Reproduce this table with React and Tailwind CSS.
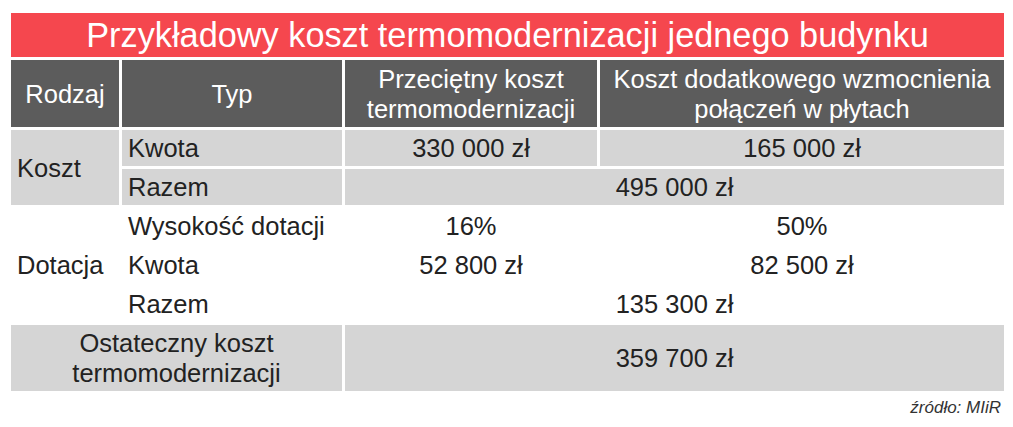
import React from "react";

const gray = "bg-[#d5d5d5]";

export default function App() {
  return (
    <div className="w-[1013px] h-[427px] bg-white font-['Liberation_Sans',Arial,sans-serif] text-[#222222] text-[25.5px] leading-[30px]">
      <div className="pt-[13px] pl-[11px]">
        <div className="grid grid-cols-[108px_220px_252px_404px] gap-[3px]">
          <div className="col-span-4 h-[44px] bg-[#f5474e] text-white text-[34.3px] flex items-center justify-center">
            Przykładowy koszt termomodernizacji jednego budynku
          </div>

          <div className="h-[67px] bg-[#5c5c5c] text-white flex items-center justify-center">Rodzaj</div>
          <div className="bg-[#5c5c5c] text-white flex items-center justify-center">Typ</div>
          <div className="bg-[#5c5c5c] text-white flex items-center justify-center text-center">
            Przeciętny koszt
            <br />
            termomodernizacji
          </div>
          <div className="bg-[#5c5c5c] text-white flex items-center justify-center text-center">
            Koszt dodatkowego wzmocnienia
            <br />
            połączeń w płytach
          </div>

          <div className={`row-span-2 ${gray} flex items-center px-[6px]`}>Koszt</div>
          <div className={`h-[36px] ${gray} flex items-center px-[6px]`}>Kwota</div>
          <div className={`${gray} flex items-center justify-center`}>330 000 zł</div>
          <div className={`${gray} flex items-center justify-center`}>165 000 zł</div>
          <div className={`h-[36px] ${gray} flex items-center px-[6px]`}>Razem</div>
          <div className={`col-span-2 ${gray} flex items-center justify-center`}>495 000 zł</div>

          <div className="row-span-3 flex items-center px-[6px]">Dotacja</div>
          <div className="h-[36px] flex items-center px-[6px]">Wysokość dotacji</div>
          <div className="flex items-center justify-center">16%</div>
          <div className="flex items-center justify-center">50%</div>
          <div className="h-[36px] flex items-center px-[6px]">Kwota</div>
          <div className="flex items-center justify-center">52 800 zł</div>
          <div className="flex items-center justify-center">82 500 zł</div>
          <div className="h-[36px] flex items-center px-[6px]">Razem</div>
          <div className="col-span-2 flex items-center justify-center">135 300 zł</div>

          <div className={`col-span-2 h-[66px] ${gray} flex items-center justify-center text-center`}>
            Ostateczny koszt
            <br />
            termomodernizacji
          </div>
          <div className={`col-span-2 ${gray} flex items-center justify-center`}>359 700 zł</div>
        </div>
        <div className="w-[990px] mt-[7px] text-right italic text-[17px] leading-[20px] text-[#333333]">
          źródło: MIiR
        </div>
      </div>
    </div>
  );
}
